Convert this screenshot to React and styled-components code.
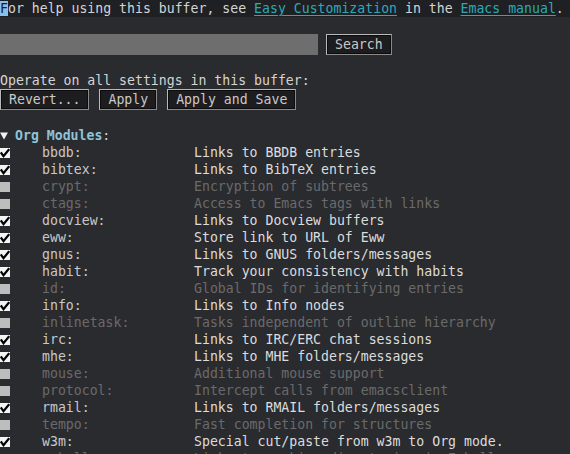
import styled, { createGlobalStyle } from "styled-components";

const GlobalStyle = createGlobalStyle`
  html, body {
    margin: 0;
    padding: 0;
    background: #2a2b2f;
  }
`

const Buffer = styled.div`
  width: 570px;
  height: 454px;
  overflow: hidden;
  background: #2a2b2f;
  color: #d4d4d4;
  font-family: "DejaVu Sans Mono", "Liberation Mono", monospace;
  font-size: 13.2px;
  line-height: 17px;
  white-space: pre;
`

const Line = styled.div`
  height: 17px;
  background: ${(p) => (p.$dark ? "#1f2024" : "transparent")};
`

const Cursor = styled.span`
  background: #86c1ee;
  color: #1f2024;
`

const Link = styled.span`
  color: #2ea8b8;
  text-decoration: underline;
  text-underline-offset: 2px;
`

const WidgetRow = styled.div`
  display: flex;
  align-items: center;
  gap: ${(p) => p.$gap || 10}px;
  height: 21px;
`

const SearchField = styled.div`
  width: 318px;
  height: 21px;
  background: #6e6e6e;
`

const Button = styled.div`
  box-sizing: border-box;
  height: 21px;
  padding: 0 8px;
  display: flex;
  align-items: center;
  background: #1d1d20;
  color: #c9c9c9;
  border: 1px solid #b9b9b9;
  border-right-color: #8a8a8a;
  border-bottom-color: #8a8a8a;
  box-shadow: inset 0 0 0 1px #0c0c0e;
`

const Heading = styled.div`
  height: 17px;
  display: flex;
  align-items: center;
`

const Triangle = styled.svg`
  width: 8px;
  height: 8px;
  margin-right: 7px;
`

const GroupName = styled.span`
  color: #8ec3d8;
  font-weight: bold;
`

const ModuleRow = styled.div`
  display: grid;
  grid-template-columns: 42px 152px 1fr;
  align-items: center;
  height: 17px;
  color: ${(p) => (p.$on ? "#c8c8c8" : "#6a6a6a")};
`

const Description = styled.span`
  color: ${(p) => (p.$on ? "#dcdcdc" : "#6a6a6a")};
`

function Checkbox({ on }) {
  return (
    <svg width="10" height="10" viewBox="0 0 10 10">
      <rect x="0" y="0" width="10" height="10" fill={on ? "#f4f4f4" : "#bdbdbd"} />
      {on && <path d="M0.8 4.5 L3.5 8.2 L9.2 1.2" stroke="#000" strokeWidth="2.2" fill="none" />}
    </svg>
  )
}

const modules = [
  ["bbdb", "Links to BBDB entries", true],
  ["bibtex", "Links to BibTeX entries", true],
  ["crypt", "Encryption of subtrees", false],
  ["ctags", "Access to Emacs tags with links", false],
  ["docview", "Links to Docview buffers", true],
  ["eww", "Store link to URL of Eww", true],
  ["gnus", "Links to GNUS folders/messages", true],
  ["habit", "Track your consistency with habits", true],
  ["id", "Global IDs for identifying entries", false],
  ["info", "Links to Info nodes", true],
  ["inlinetask", "Tasks independent of outline hierarchy", false],
  ["irc", "Links to IRC/ERC chat sessions", true],
  ["mhe", "Links to MHE folders/messages", true],
  ["mouse", "Additional mouse support", false],
  ["protocol", "Intercept calls from emacsclient", false],
  ["rmail", "Links to RMAIL folders/messages", true],
  ["tempo", "Fast completion for structures", false],
  ["w3m", "Special cut/paste from w3m to Org mode.", true],
  ["eshell", "Links to working directories in Eshell", false],
]

export default function App() {
  return (
    <>
      <GlobalStyle />
      <Buffer>
        <Line $dark>
          <Cursor>F</Cursor>or help using this buffer, see <Link>Easy Customization</Link> in the <Link>Emacs manual</Link>.
        </Line>
        <Line />
        <WidgetRow $gap={8}>
          <SearchField />
          <Button>Search</Button>
        </WidgetRow>
        <Line />
        <Line>Operate on all settings in this buffer:</Line>
        <WidgetRow $gap={10}>
          <Button>Revert...</Button>
          <Button>Apply</Button>
          <Button>Apply and Save</Button>
        </WidgetRow>
        <Line />
        <Heading>
          <Triangle viewBox="0 0 8 8">
            <path d="M0 0.5 H8 L4 7.5 Z" fill="#f0f0f0" />
          </Triangle>
          <GroupName>Org Modules</GroupName>:
        </Heading>
        {modules.map(([name, desc, on]) => (
          <ModuleRow key={name} $on={on}>
            <Checkbox on={on} />
            <span>{name}:</span>
            <Description $on={on}>{desc}</Description>
          </ModuleRow>
        ))}
      </Buffer>
    </>
  )
}
